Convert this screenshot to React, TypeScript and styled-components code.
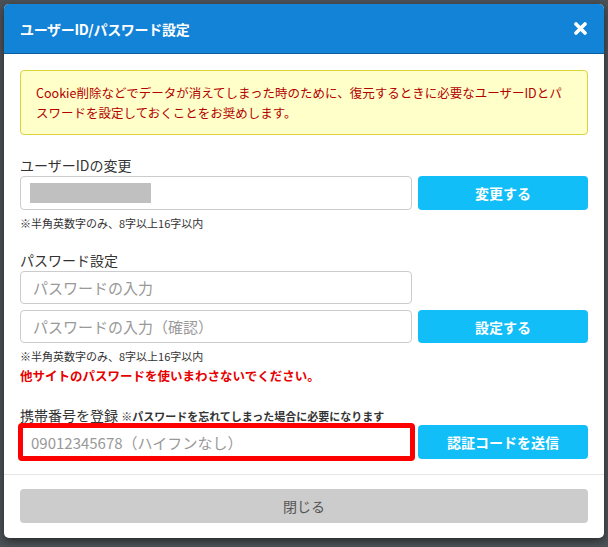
import styled, { createGlobalStyle } from 'styled-components';

const GlobalStyle = createGlobalStyle`
  html, body {
    margin: 0;
    padding: 0;
    background: #4b5257;
    font-family: "Noto Sans CJK JP", "Noto Sans", sans-serif;
  }
  * { box-sizing: border-box; }
`;

const Backdrop = styled.div`
  width: 608px;
  height: 547px;
  padding: 4px 4px 0 4px;
  overflow: hidden;
`;

const Modal = styled.div`
  width: 600px;
  background: #fff;
  border-radius: 5px;
  overflow: hidden;
  box-shadow: 0 3px 9px rgba(0, 0, 0, 0.5);
`;

const Header = styled.div`
  height: 50px;
  display: flex;
  align-items: center;
  justify-content: space-between;
  padding: 0 16px;
  background: #1383d8;
  border-bottom: 1px solid #0c5f9f;
`;

const Title = styled.h4`
  margin: 0;
  color: #fff;
  font-size: 14px;
  font-weight: bold;
  letter-spacing: -0.3px;
`;

const CloseIcon = styled.button`
  width: 16px;
  height: 16px;
  padding: 0;
  border: 0;
  background: none;
  display: flex;
  align-items: center;
  justify-content: center;
  cursor: pointer;
`;

const Body = styled.div`
  padding: 16px 16px 13px;
`;

const Alert = styled.div`
  padding: 12px 15px 11px;
  background: #ffffc9;
  border: 1px solid #ddd33a;
  border-radius: 4px;
  color: #b30000;
  font-size: 12.5px;
  line-height: 20px;
`;

const Section = styled.div<{ $top: number }>`
  margin-top: ${p => p.$top}px;
`;

const Label = styled.div<{ $tight?: boolean }>`
  color: #333;
  font-size: 14px;
  line-height: 20px;
  margin-bottom: ${p => (p.$tight ? -3 : 1)}px;
`;

const SubNote = styled.span`
  font-size: 11px;
  font-weight: bold;
  color: #333;
`;

const Row = styled.div<{ $gap?: number }>`
  display: flex;
  align-items: center;
  gap: ${p => p.$gap ?? 6}px;
  & + & {
    margin-top: 6px;
  }
`;

const Input = styled.input<{ $alert?: boolean }>`
  flex: 0 0 ${p => (p.$alert ? 397 : 392)}px;
  height: ${p => (p.$alert ? 38 : 33)}px;
  margin-left: ${p => (p.$alert ? -2 : 0)}px;
  padding: 0 ${p => (p.$alert ? 8 : 12)}px;
  border: ${p => (p.$alert ? '5px solid #ff0000' : '1px solid #ccc')};
  border-radius: 4px;
  font-family: inherit;
  font-size: 15px;
  color: #555;
  outline: none;
  &::placeholder {
    color: #999;
  }
`;

const MaskedField = styled.div`
  flex: 0 0 392px;
  height: 34px;
  padding: 6px 9px;
  border: 1px solid #ccc;
  border-radius: 4px;
`;

const Redaction = styled.div`
  width: 121px;
  height: 20px;
  background: #c0c0c0;
`;

const ActionButton = styled.button<{ $tall?: boolean }>`
  flex: 1;
  height: ${p => (p.$tall ? 34 : 33)}px;
  border: 0;
  border-radius: 4px;
  background: #12bef7;
  color: #fff;
  font-family: inherit;
  font-size: 14px;
  font-weight: bold;
  cursor: pointer;
`;

const Note = styled.div`
  margin-top: 5px;
  color: #333;
  font-size: 11px;
  line-height: 16px;
`;

const Warning = styled.div`
  margin-top: 2px;
  color: #e60000;
  font-size: 12.5px;
  font-weight: bold;
  line-height: 20px;
`;

const Footer = styled.div`
  padding: 14px 16px 15px;
  border-top: 1px solid #e5e5e5;
`;

const CloseButton = styled.button`
  width: 100%;
  height: 34px;
  border: 0;
  border-radius: 4px;
  background: #cccccc;
  color: #555;
  font-family: inherit;
  font-size: 14px;
  cursor: pointer;
`;

export default function App() {
  return (
    <>
      <GlobalStyle />
      <Backdrop>
        <Modal>
          <Header>
            <Title>ユーザーID/パスワード設定</Title>
            <CloseIcon aria-label='閉じる'>
              <svg width='13' height='13' viewBox='0 0 13 13'>
                <path d='M2 2 L11 11 M11 2 L2 11' stroke='#fff' strokeWidth='3.6' strokeLinecap='round' />
              </svg>
            </CloseIcon>
          </Header>
          <Body>
            <Alert>
              Cookie削除などでデータが消えてしまった時のために、復元するときに必要なユーザーIDとパスワードを設定しておくことをお奨めします。
            </Alert>

            <Section $top={20}>
              <Label>ユーザーIDの変更</Label>
              <Row>
                <MaskedField>
                  <Redaction />
                </MaskedField>
                <ActionButton $tall>変更する</ActionButton>
              </Row>
              <Note>※半角英数字のみ、8字以上16字以内</Note>
            </Section>

            <Section $top={19}>
              <Label>パスワード設定</Label>
              <Row>
                <Input type='password' placeholder='パスワードの入力' />
              </Row>
              <Row>
                <Input type='password' placeholder='パスワードの入力（確認）' />
                <ActionButton>設定する</ActionButton>
              </Row>
              <Note>※半角英数字のみ、8字以上16字以内</Note>
              <Warning>他サイトのパスワードを使いまわさないでください。</Warning>
            </Section>

            <Section $top={19}>
              <Label $tight>
                携帯番号を登録 <SubNote>※パスワードを忘れてしまった場合に必要になります</SubNote>
              </Label>
              <Row $gap={3}>
                <Input $alert type='tel' placeholder='09012345678（ハイフンなし）' />
                <ActionButton $tall>認証コードを送信</ActionButton>
              </Row>
            </Section>
          </Body>
          <Footer>
            <CloseButton>閉じる</CloseButton>
          </Footer>
        </Modal>
      </Backdrop>
    </>
  );
}
